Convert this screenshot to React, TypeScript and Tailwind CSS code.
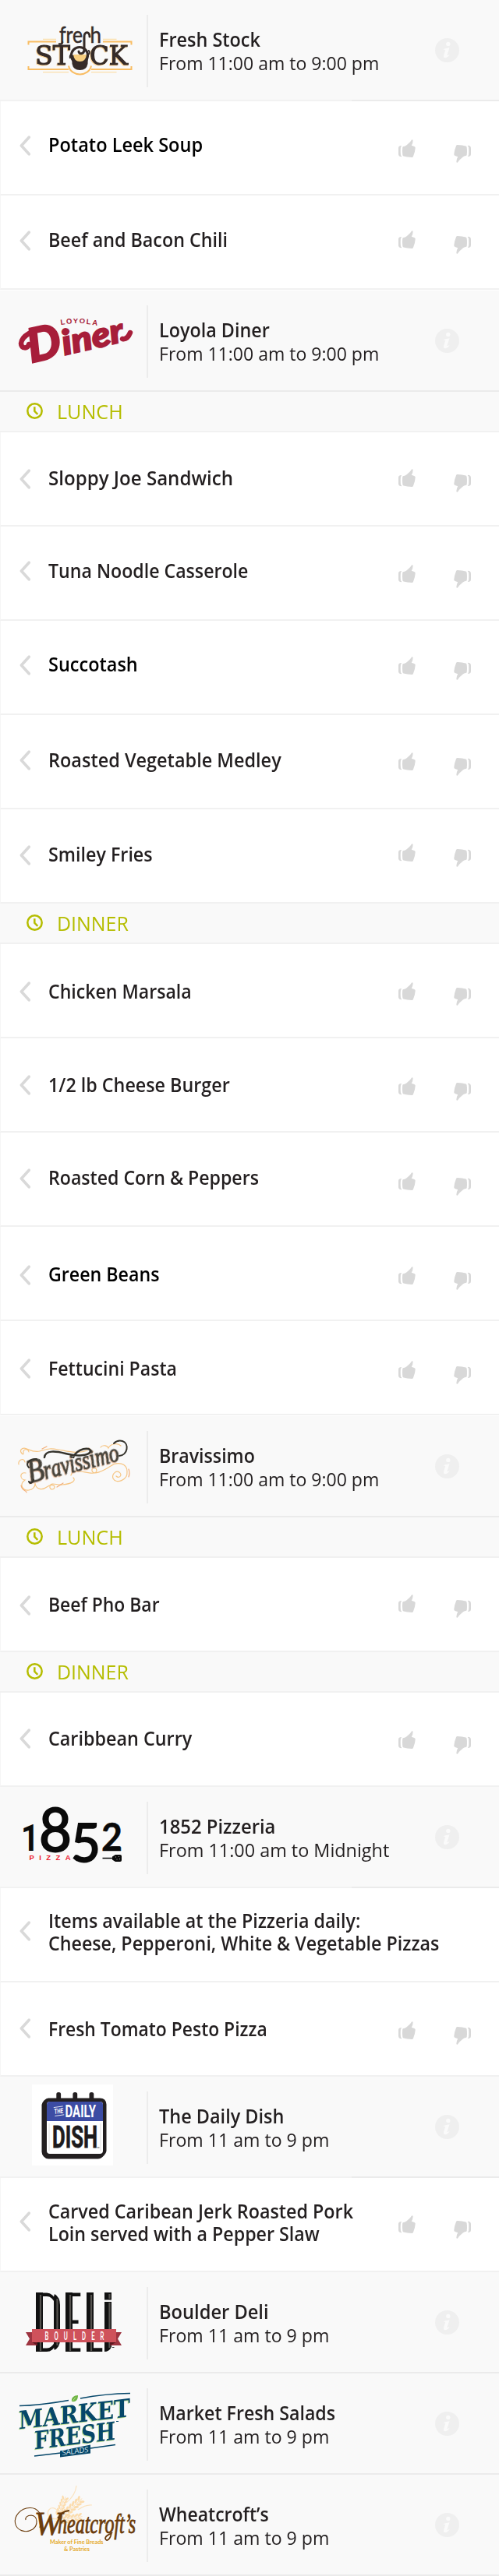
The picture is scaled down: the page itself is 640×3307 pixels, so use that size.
import { useLayoutEffect, useRef, useState, type ReactNode } from "react";

/* One line of text, condensed horizontally to a given width. */
function Fit({ w, className = "", children }: { w: number; className?: string; children: ReactNode }) {
  const ref = useRef<HTMLSpanElement>(null);
  const [scale, setScale] = useState(1);
  useLayoutEffect(() => {
    if (ref.current) setScale(w / ref.current.offsetWidth);
  }, [w]);
  return (
    <span
      ref={ref}
      className={`block w-max origin-left whitespace-nowrap ${className}`}
      style={{ transform: `scaleX(${scale})` }}
    >
      {children}
    </span>
  );
}

function Chevron() {
  return (
    <svg width="14" height="26" viewBox="0 0 14 26" className="block">
      <path d="M12.200 2.200 2.400 13l9.800 10.800" fill="none" stroke="#d9d9d9" strokeWidth="3.600" strokeLinecap="round" strokeLinejoin="round" />
    </svg>
  );
}

function Thumb({ className = "" }: { className?: string }) {
  return (
    <svg width="23" height="24" viewBox="0 0 23 24" className={`block shrink-0 ${className}`}>
      <g fill="#d8d8d8">
        <path d="M6 9.300Q9 9 10.600 7.300L15 3.200 17 .5Q18.500-.3 18.600 1.200 18.800 4.200 16.800 7.800L20.300 9Q21.900 9.500 21.700 11 21.500 15.500 19 21.700 18.500 23.300 17 23.100 11 22.800 6.600 21.600 5.600 21.300 5.400 20 4.700 15 5.300 10.300 5.400 9.400 6 9.300Z" />
        <path d="M3.800 8.100Q.2 8.300.1 10.500-.2 15 .1 19.600.3 22 4 22.300L4 21.200Q3 21 2.900 19.500 2.500 15 2.900 10.500 3 9.200 3.800 9Z" />
      </g>
    </svg>
  );
}

function Info() {
  return (
    <svg width="31" height="31" viewBox="0 0 31 31" className="mt-[49px] block shrink-0">
      <circle cx="15.500" cy="15.500" r="15.500" fill="#efefef" />
      <circle cx="16.800" cy="7.400" r="2.700" fill="#fafafa" />
      <path d="M10.500 14.200Q14 12.900 18.500 12.300L15.400 21.700Q15.500 22.700 18.700 20.700 16.500 25 12.500 25.200 10.300 25 11.200 21.800L13.200 15.200Q12.500 14.500 10.500 14.200Z" fill="#fafafa" />
    </svg>
  );
}

function Clock() {
  return (
    <svg width="21" height="21" viewBox="0 0 21 21" className="block shrink-0">
      <circle cx="10.500" cy="10.500" r="9.200" fill="none" stroke="#b5bd00" strokeWidth="2.500" />
      <path d="M10.300 5.200v5.600l4 4" fill="none" stroke="#b5bd00" strokeWidth="2.500" />
    </svg>
  );
}

function Logo({ children }: { children: ReactNode }) {
  return (
    <svg width="188" height="128" viewBox="0 0 188 128" className="block shrink-0 overflow-visible">
      {children}
    </svg>
  );
}

const G = "spacingAndGlyphs" as const;

function FreshStockLogo() {
  return (
    <Logo>
      <g fill="none" stroke="#f9bd63" strokeWidth="2">
        <path d="M36.500 57.500v-4H72M132 53.500h36.500v4M36.500 85v4H88M117 89h51.500v-4" />
        <path d="M88 84.500C91 99 114 99 117 84.500" />
        <path d="M55 50.300h17M132 50.300h17.500M55 92.700h33M117 92.700h32.500" stroke="#fbe0ac" strokeWidth="1.300" />
      </g>
      <g fontFamily="DejaVu Serif" fill="#352b28" stroke="#352b28" strokeWidth="1.100" className="drop-shadow-[-1px_1px_0_#fbd294]">
        <text x="45" y="83" fontSize="33" textLength="45" lengthAdjust={G}>ST</text>
        <text x="115" y="83" fontSize="33" textLength="49" lengthAdjust={G}>CK</text>
      </g>
      <circle cx="102" cy="71" r="10.500" fill="none" stroke="#352b28" strokeWidth="3.200" />
      <path d="M92 71h21l-.5 11Q111 90 102.500 90 94 90 92.500 82Z" fill="#352b28" />
      <path d="M94 70h17q-1 9-8.500 9T94 70Z" fill="#f8cf80" />
      <path d="M92 70q-3 0-2 5M113 65q3 0 1 5" fill="none" stroke="#352b28" strokeWidth="2" />
      <path d="M115 47c0-7-7-7-7 0v17c0 6-7 6-7 2" fill="none" stroke="#352b28" strokeWidth="3" strokeLinecap="round" />
      <g fontFamily="Lato" fontSize="29" fill="#352b28" stroke="#352b28" strokeWidth=".5">
        <text x="76" y="55" textLength="30" lengthAdjust={G}>fre</text>
        <text x="115.500" y="55" textLength="14.500" lengthAdjust={G}>h</text>
      </g>
      <path d="M80 54q0 3-4 2.500" fill="none" stroke="#352b28" strokeWidth="2.500" strokeLinecap="round" />
    </Logo>
  );
}

function DinerLogo() {
  return (
    <Logo>
      <g fill="#a71e3a" stroke="#a71e3a" fontFamily="Lato" fontWeight="900">
        <text fontFamily="Liberation Sans" fontWeight="700" fontSize="9.500" textAnchor="middle" stroke="none">
          <tspan x="81" y="44" rotate="-8">L</tspan>
          <tspan x="89" y="43" rotate="-5">O</tspan>
          <tspan x="97" y="42">Y</tspan>
          <tspan x="105.500" y="42">O</tspan>
          <tspan x="113.500" y="43" rotate="5">L</tspan>
          <tspan x="121.500" y="44" rotate="8">A</tspan>
        </text>
        <g transform="translate(40 93) rotate(-13)" fontStyle="italic">
          <text x="0" y="0" fontSize="60" textLength="43" lengthAdjust={G} strokeWidth="2">D</text>
          <text x="44" y="0" fontSize="44" textLength="80" lengthAdjust={G} strokeWidth="2">iner</text>
        </g>
      </g>
      <path d="M60 49C42 50 28 58 27 68c0 7 9 7 10 1M157 62c5 1 8-3 10-8" fill="none" stroke="#a71e3a" strokeWidth="6.500" strokeLinecap="round" />
    </Logo>
  );
}

function BravissimoLogo() {
  return (
    <Logo>
      <g fill="none" stroke="#f6c583" strokeWidth="1.200" strokeLinecap="round">
        <path d="M37 46c-1-5-8-4-7 1s-5-1-3-4c5-6 12 5 24 2 11-3 12-4 24-2 12 2 25 6 37 1M129 40c3-4 9-2 10 1 3-6 12-7 16-3M24 62c-1-5 6-10 8-3M33 73c-8-2-8 8-1 9-8 6-3 14 5 13 6-1 8-5 8-9 1 9 10 9 15 5 4-3 10-4 10 0s-7 4-6-1c1-6 9-1 16-2 12-1 18-5 14-9" />
        <path d="M91 76c1-6 7-5 12-5 8 1 20 5 21-1 0-5-7-4-6 0 1 7 15 0 24-6 8-6 21-4 21 7 1 11-14 17-18 9-2-6 5-12 9-7 3 4-2 7-5 4" />
        <path d="M27 89c1 7 8 7 7 9M165 68q2 5 0 10M54 42l6-3M73 91l8-5M114 41l5 5" stroke="#f3ae78" />
      </g>
      <g
        transform="translate(38 86) rotate(-14)"
        fontFamily="Liberation Serif"
        fontStyle="italic"
        fill="#46433b"
        stroke="#46433b"
        strokeWidth="1"
        className="drop-shadow-[-1px_1px_0_#f8cdb0]"
      >
        <text x="0" y="0" fontSize="43" textLength="22" lengthAdjust={G}>B</text>
        <text x="21" y="0" fontSize="33" textLength="99" lengthAdjust={G}>ravissimo</text>
      </g>
      <g fill="none" stroke="#35332c" strokeLinecap="round">
        <path d="M57 53c1-10 15-8 27-5 14 4 31 3 32-3 0-6-17-4-22 8" strokeWidth="2.500" />
        <path d="M37 66c-5-5 1-12 10-11M37 84c2 4 5 1 6-2M153 51c11-1 13-16 4-19-4-1-8 0-11 3" strokeWidth="2" />
      </g>
    </Logo>
  );
}

function PizzaLogo() {
  return (
    <Logo>
      <g fontFamily="Lato" fill="#0a0a0a" stroke="#0a0a0a">
        <text x="27" y="82" fontFamily="Roboto" fontSize="49" fontWeight="700" textLength="23" lengthAdjust={G} strokeWidth="0">1</text>
        <text x="50" y="82.500" fontSize="78" textLength="42" lengthAdjust={G} strokeWidth="2">8</text>
        <text x="91" y="95.500" fontSize="68" textLength="38" lengthAdjust={G} strokeWidth="2">5</text>
        <text x="130" y="82" fontSize="49" fontWeight="700" textLength="27" lengthAdjust={G} strokeWidth=".5">2</text>
      </g>
      <text x="37.500" y="94.300" fontFamily="Liberation Sans" fontWeight="700" fontSize="9.500" fill="#ec1c2e" textLength="53">PIZZA</text>
      <path d="M131.500 91.500H145" stroke="#0a0a0a" strokeWidth="1.500" />
      <path d="M144 89.500l4-2.500h6q2 0 2 2v5q0 2-2 2h-6l-4-2.500Z" fill="#0a0a0a" />
      <path d="M148 90h1M152 89.500h1M149.500 93h1M153 92.500h1" stroke="#aaa" />
    </Logo>
  );
}

function DailyDishLogo() {
  return (
    <Logo>
      <path fill="#fff" d="M41 10h104v104H41z" />
      <g fill="#231f20">
        <rect x="72.300" y="20" width="5.800" height="12" rx="2.500" />
        <rect x="93.400" y="20" width="5.800" height="12" rx="2.500" />
        <rect x="114.500" y="20" width="5.800" height="12" rx="2.500" />
        <path d="M62 27.500h66q8 0 8.500 8v60q-.5 3-3 5.500-4 4.500-8 4.500H62q-4-.5-6-3-2.500-3-2.500-6V36q.5-3 3-5.500 3-3 5.500-3Z" />
      </g>
      <rect x="60" y="32" width="72" height="67" rx="4" fill="#fff" />
      <path d="M60 57V36q0-4 4-4h64q4 0 4 4v21Z" fill="#3c4ca4" />
      <path d="M63 60v35M129 60v35" stroke="#ddd" strokeWidth="1" />
      <g fontFamily="Roboto" fontWeight="700" fill="#fff">
        <text x="83.500" y="52.300" fontSize="22.500" textLength="39.500" lengthAdjust={G}>DAILY</text>
        <g transform="translate(70 48) rotate(-8)">
          <text x="0" y="0" fontSize="9" textLength="11.500" lengthAdjust={G} fontStyle="italic">THE</text>
          <path d="M0-8.500h12M0 2.500h12" stroke="#fff" strokeWidth=".8" />
        </g>
      </g>
      <text x="67" y="91" fontFamily="Roboto" fontWeight="700" fontSize="39" fill="#1d1b1c" stroke="#1d1b1c" strokeWidth=".8" textLength="58" lengthAdjust={G}>DISH</text>
      <path d="M124.500 91h3" stroke="#555" />
    </Logo>
  );
}

function DeliLogo() {
  return (
    <Logo>
      <g fontFamily="Lato" fontWeight="300" fontSize="106" fill="#111">
        <text x="42" y="102" textLength="38" lengthAdjust={G}>D</text>
        <text x="80.500" y="102" textLength="25" lengthAdjust={G}>E</text>
        <text x="108" y="102" textLength="24" lengthAdjust={G}>L</text>
      </g>
      <path
        d="M46 26h9v76h-9zM84 26h9v76h-9zM111 26h9v76h-9zM69 34q0-4 1-6 7 4 7 14v44q0 10-7 14-1-2-1-6ZM134 26h9v9.500h-9zM134 38h9v58q-3 6-9 6Z"
        fill="#111"
      />
      <path d="M52 29v72M73.500 34v60M90 29v72M117 29v72M140.500 39v58M140.500 28v6" stroke="#55534f" strokeWidth="2.200" />
      <path d="M33 77h15v17H33l5-8.500ZM156 77h-15v17h15l-5-8.500Z" fill="#9d3440" />
      <path d="M41 90h7v4ZM149 90h-8v4Z" fill="#5c1720" />
      <path d="M41 73h108v17H41z" fill="#cf525b" />
      <g transform="translate(57.500 86.500) scale(.5 1)">
        <text x="0" y="0" fontFamily="Roboto" fontWeight="500" fontSize="15.500" fill="#fff" textLength="152">BOULDER</text>
      </g>
      <path d="M144 96.500h2.500" stroke="#333" />
    </Logo>
  );
}

function MarketLogo() {
  return (
    <Logo>
      <g fontFamily="DejaVu Serif" fontWeight="700" fill="#06476a" className="drop-shadow-[-1px_1px_0_#b9dd92]">
        <text transform="translate(24 71.500) skewY(-6.500)" fontSize="32" textLength="143" lengthAdjust={G}>MARKET</text>
        <text transform="translate(44 97.500) skewY(-7)" fontSize="32" textLength="104" lengthAdjust={G}>FRESH</text>
      </g>
      <g fill="none" stroke="#06476a" strokeWidth="1.300">
        <path d="M25 41.500Q50 41 88 34.500M103 32Q135 26 167 25.500M44 106l34-4M116 96l32-4.500" />
      </g>
      <path d="M77 99.500l39-8v11l-39 5Z" fill="#06476a" />
      <text transform="translate(79.500 105) skewY(-7)" fontFamily="Open Sans" fontSize="9.500" fill="#dce8ee" textLength="34" lengthAdjust={G}>SALADS</text>
      <path d="M92 36c-1-5 3-8 8-8 0 5-2 9-8 8Z" fill="#6fb544" />
      <path d="M93 35.500l4-5" stroke="#b9dd92" />
      <path d="M149 61.500h3" stroke="#06476a" />
    </Logo>
  );
}

const GRAINS = [0, 1, 2, 3, 4, 5];

function Ear({ transform }: { transform: string }) {
  return (
    <g transform={transform} fill="#fbdcae">
      <path d="M-.4 0h.8v-38h-.8z" />
      {GRAINS.map((i) => (
        <g key={i}>
          <ellipse cx="-3" cy={-10 - i * 5} rx="1.500" ry="3.400" transform={`rotate(-32 -3 ${-10 - i * 5})`} />
          <ellipse cx="3" cy={-10 - i * 5} rx="1.500" ry="3.400" transform={`rotate(32 3 ${-10 - i * 5})`} />
        </g>
      ))}
    </g>
  );
}

function WheatcroftLogo() {
  return (
    <Logo>
      <Ear transform="translate(72 58) rotate(22) scale(.85)" />
      <Ear transform="translate(77 56) rotate(48)" />
      <Ear transform="translate(70 60) rotate(80) scale(.95)" />
      <path d="M85 36q12-10 13-22M100 45q10-7 18-6M73 56c-10 4-16-8-8-13 6-2 11 4 7 7M70 56q-8-2-3 13" fill="none" stroke="#fbe3c0" strokeWidth="1.200" />
      <g fontFamily="Liberation Serif" fontStyle="italic" fill="#6b3c0c" stroke="#6b3c0c">
        <text x="44" y="77" fontSize="43" textLength="35" lengthAdjust={G} strokeWidth=".8">W</text>
        <text x="74" y="74.500" fontSize="35" textLength="100" lengthAdjust={G} strokeWidth=".9">heatcroft’s</text>
      </g>
      <g fill="none" stroke="#6b3c0c" strokeWidth="1.100">
        <path d="M51 68C56 50 48 42 38 42.500 26 43 18 53 19.500 62 21 71 32 76 42 70c7-5 7-17-2-18-5 0-8 3-7 6" />
        <path d="M74 56q4-9 15-10M143 74c-1 8-6 13-8 8 0-5 7-5 9-8" strokeWidth="1.800" />
      </g>
      <g fontFamily="Lato" fontWeight="700" fontSize="8.300" fill="#e5aa2c">
        <text x="64" y="88.500" textLength="68.500" lengthAdjust={G}>Maker of Fine Breads</text>
        <text x="82" y="97.500" textLength="33" lengthAdjust={G}>&amp; Pastries</text>
      </g>
    </Logo>
  );
}

type VenueProps = {
  logo: ReactNode;
  name: string;
  nameW: number;
  hours: string;
  hoursW: number;
  gap?: boolean;
  split?: boolean;
};

function Venue({ logo, name, nameW, hours, hoursW, gap, split }: VenueProps) {
  return (
    <header className={gap ? "border-t border-white" : ""}>
      <div className="flex h-32 bg-[#f9f9f9]">
        {logo}
        <div className="mt-[19px] h-[93px] w-0.5 shrink-0 bg-[#ececec]" />
        <div className="mt-9 ml-[14px] w-[354px] text-[24.5px] leading-[30px] text-[#231f20]">
          <Fit w={nameW} className="font-semibold">{name}</Fit>
          <Fit w={hoursW}>{hours}</Fit>
        </div>
        <Info />
      </div>
      <div className="flex h-0.5 bg-[#ebebeb]">{split && <div className="w-[451px] bg-[#f2f2f2]" />}</div>
    </header>
  );
}

function Meal({ name, w }: { name: string; w: number }) {
  return (
    <div className="flex h-[52px] items-start border-b-2 border-[#f1f1f1] bg-[#f9f9f9] pl-[34px] text-[#b5bd00]">
      <div className="mt-3.5">
        <Clock />
      </div>
      <div className="mt-2 ml-[18px] text-[26px] leading-[34px]">
        <Fit w={w}>{name}</Fit>
      </div>
    </div>
  );
}

type DishProps = {
  lines: [string, number][];
  text: string;
  chev: string;
  thumbs?: string;
  black?: boolean;
};

function Dish({ lines, text, chev, thumbs, black }: DishProps) {
  return (
    <div className="flex h-[121px] items-start border-b-2 border-l border-b-[#f1f1f1] border-l-[#f6f6f6] bg-white pl-6">
      <div className={chev}>
        <Chevron />
      </div>
      <div className={`ml-[23px] w-[449px] shrink-0 text-[24.5px] leading-[29px] font-semibold ${black ? "text-black" : "text-[#231f20]"} ${text}`}>
        {lines.map(([line, w]) => (
          <Fit key={line} w={w}>{line}</Fit>
        ))}
      </div>
      {thumbs && (
        <div className={`flex ${thumbs}`}>
          <Thumb />
          <Thumb className="mt-1.5 ml-[47px] rotate-180" />
        </div>
      )}
    </div>
  );
}

const DAY = "From 11:00 am to 9:00 pm";
const SHORT = "From 11 am to 9 pm";

export default function App() {
  return (
    <main className="w-[640px] overflow-hidden bg-white font-['Open_Sans',sans-serif]">
      <Venue logo={<FreshStockLogo />} name="Fresh Stock" nameW={130} hours={DAY} hoursW={282} split />
      <Dish lines={[["Potato Leek Soup", 198]]} text="mt-[41px]" chev="mt-[44px]" thumbs="mt-[49px]" black />
      <Dish lines={[["Beef and Bacon Chili", 230]]} text="mt-[42px]" chev="mt-[45px]" thumbs="mt-[45px]" />

      <Venue logo={<DinerLogo />} name="Loyola Diner" nameW={142} hours={DAY} hoursW={282} gap />
      <Meal name="LUNCH" w={85} />
      <Dish lines={[["Sloppy Joe Sandwich", 237]]} text="mt-[44px]" chev="mt-[47px]" thumbs="mt-[47px]" />
      <Dish lines={[["Tuna Noodle Casserole", 256]]} text="mt-[42px]" chev="mt-[44px]" thumbs="mt-[49px]" />
      <Dish lines={[["Succotash", 115]]} text="mt-[41px]" chev="mt-[44px]" thumbs="mt-[46px]" black />
      <Dish lines={[["Roasted Vegetable Medley", 299]]} text="mt-[43px]" chev="mt-[45px]" thumbs="mt-[48px]" />
      <Dish lines={[["Smiley Fries", 134]]} text="mt-[43px]" chev="mt-[46px]" thumbs="mt-[44px]" />
      <Meal name="DINNER" w={92} />
      <Dish lines={[["Chicken Marsala", 184]]} text="mt-[46px]" chev="mt-[48px]" thumbs="mt-[49px]" />
      <Dish lines={[["1/2 lb Cheese Burger", 233]]} text="mt-[45px]" chev="mt-[47px]" thumbs="mt-[50px]" />
      <Dish lines={[["Roasted Corn & Peppers", 270]]} text="mt-[43px]" chev="mt-[46px]" thumbs="mt-[51px]" />
      <Dish lines={[["Green Beans", 142]]} text="mt-[46px]" chev="mt-[49px]" thumbs="mt-[51px]" black />
      <Dish lines={[["Fettucini Pasta", 165]]} text="mt-[46px]" chev="mt-[48px]" thumbs="mt-[51px]" />

      <Venue logo={<BravissimoLogo />} name="Bravissimo" nameW={123} hours={DAY} hoursW={282} gap />
      <Meal name="LUNCH" w={85} />
      <Dish lines={[["Beef Pho Bar", 143]]} text="mt-[45px]" chev="mt-[48px]" thumbs="mt-[47px]" />
      <Meal name="DINNER" w={92} />
      <Dish lines={[["Caribbean Curry", 184]]} text="mt-[44px]" chev="mt-[46px]" thumbs="mt-[49px]" />

      <Venue logo={<PizzaLogo />} name="1852 Pizzeria" nameW={149} hours="From 11:00 am to Midnight" hoursW={295} split />
      <Dish
        lines={[
          ["Items available at the Pizzeria daily:", 400],
          ["Cheese, Pepperoni, White & Vegetable Pizzas", 501],
        ]}
        text="mt-[27px]"
        chev="mt-[42px]"
      />
      <Dish lines={[["Fresh Tomato Pesto Pizza", 281]]} text="mt-[45px]" chev="mt-[46px]" thumbs="mt-[50px]" />

      <Venue logo={<DailyDishLogo />} name="The Daily Dish" nameW={160} hours={SHORT} hoursW={218} split />
      <Dish
        lines={[
          ["Carved Caribean Jerk Roasted Pork", 391],
          ["Loin served with a Pepper Slaw", 348],
        ]}
        text="mt-[28px]"
        chev="mt-[43px]"
        thumbs="mt-[48px]"
      />
      <Venue logo={<DeliLogo />} name="Boulder Deli" nameW={141} hours={SHORT} hoursW={218} />
      <Venue logo={<MarketLogo />} name="Market Fresh Salads" nameW={226} hours={SHORT} hoursW={218} />
      <Venue logo={<WheatcroftLogo />} name="Wheatcroft’s" nameW={141} hours={SHORT} hoursW={218} />
    </main>
  );
}
